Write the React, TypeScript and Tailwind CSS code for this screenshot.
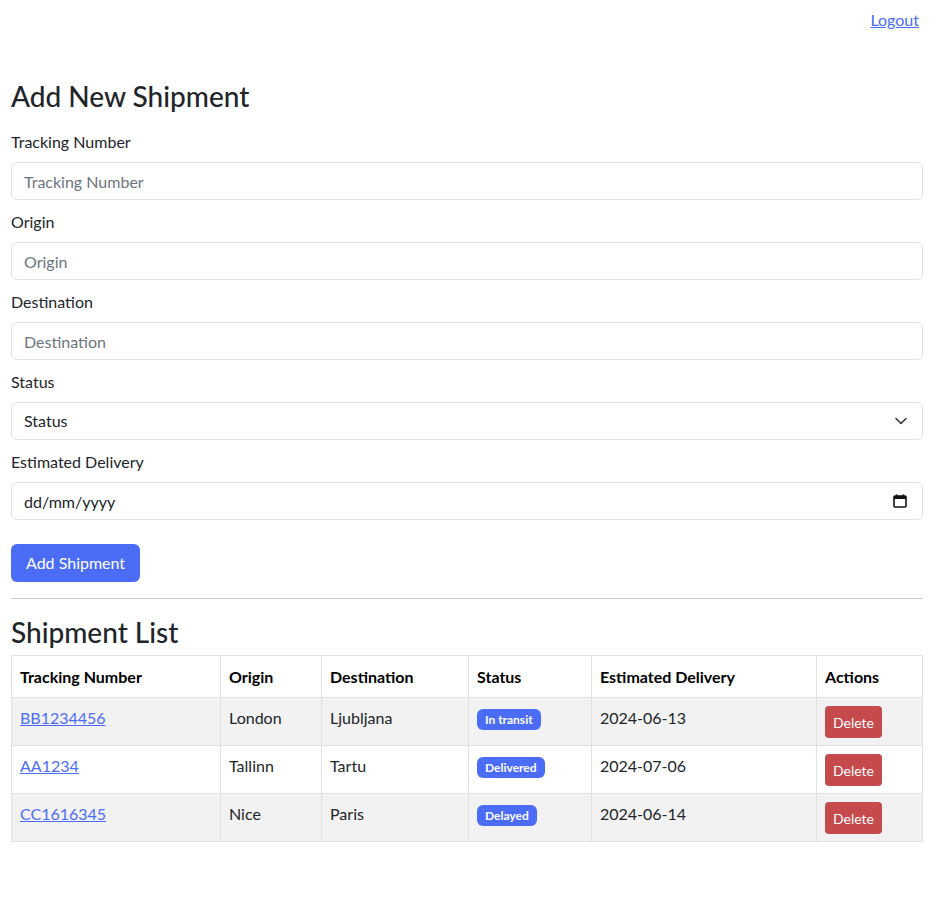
import React from 'react';

const font = { fontFamily: '"Segoe UI", Lato, "Noto Sans", sans-serif' };

const shipments = [
  { id: 'BB1234456', origin: 'London', destination: 'Ljubljana', status: 'In transit', eta: '2024-06-13' },
  { id: 'AA1234', origin: 'Tallinn', destination: 'Tartu', status: 'Delivered', eta: '2024-07-06' },
  { id: 'CC1616345', origin: 'Nice', destination: 'Paris', status: 'Delayed', eta: '2024-06-14' },
];

const Field: React.FC<{ label: string; children: React.ReactNode }> = ({ label, children }) => (
  <div className="mb-[10px]">
    <label className="block h-6 leading-6 mb-2 text-[16px] text-[#212529]">{label}</label>
    {children}
  </div>
);

const inputCls =
  'block w-full h-[38px] px-3 rounded-[6px] border border-[#dee2e6] bg-white text-[16px] text-[#212529] placeholder:text-[#6c757d] outline-none';

export default function App() {
  return (
    <div className="min-h-screen bg-white text-[#212529]" style={font}>
      <div className="h-10 flex items-center justify-end pr-[27px]">
        <a href="#" className="text-[16px] text-[#4a6cf7] underline">Logout</a>
      </div>

      <div className="w-[912px] ml-[11px]">
        <h2 className="mt-[39px] mb-[16px] h-[35px] leading-[35px] text-[28px] font-medium">Add New Shipment</h2>

        <Field label="Tracking Number">
          <input className={inputCls} placeholder="Tracking Number" />
        </Field>
        <Field label="Origin">
          <input className={inputCls} placeholder="Origin" />
        </Field>
        <Field label="Destination">
          <input className={inputCls} placeholder="Destination" />
        </Field>
        <Field label="Status">
          <div className="relative">
            <select className={inputCls + ' appearance-none'} defaultValue="">
              <option value="">Status</option>
              <option>In transit</option>
              <option>Delivered</option>
              <option>Delayed</option>
            </select>
            <svg className="absolute right-[15px] top-[14px]" width="14" height="10" viewBox="0 0 14 10" fill="none">
              <path d="M2 2.5l5 5 5-5" stroke="#343a40" strokeWidth="1.6" strokeLinecap="round" strokeLinejoin="round" />
            </svg>
          </div>
        </Field>
        <Field label="Estimated Delivery">
          <div className="relative">
            <input className={inputCls + ' placeholder:text-[#212529]'} placeholder="dd/mm/yyyy" />
            <svg className="absolute right-[16px] top-[12px]" width="14" height="14" viewBox="0 0 14 14" fill="none">
              <rect x="1" y="2" width="12" height="11" rx="1" stroke="#111" strokeWidth="1.6" />
              <rect x="1" y="2" width="12" height="3" fill="#111" />
              <rect x="3" y="0.5" width="1.6" height="2" fill="#111" />
              <rect x="9.4" y="0.5" width="1.6" height="2" fill="#111" />
            </svg>
          </div>
        </Field>

        <button className="mt-[14px] h-[38px] px-[15px] rounded-[6px] bg-[#4a6cf7] text-white text-[16px]">Add Shipment</button>

        <hr className="mt-4 border-0 border-t border-[#cccccc]" />

        <h2 className="mt-[16px] h-[35px] leading-[35px] text-[28px] font-medium">Shipment List</h2>

        <table className="mt-[5px] w-[911px] table-fixed border-collapse text-[16px]">
          <colgroup>
            <col className="w-[209px]" />
            <col className="w-[101px]" />
            <col className="w-[147px]" />
            <col className="w-[123px]" />
            <col className="w-[225px]" />
            <col className="w-[106px]" />
          </colgroup>
          <thead>
            <tr>
              {['Tracking Number', 'Origin', 'Destination', 'Status', 'Estimated Delivery', 'Actions'].map((h) => (
                <th key={h} className="border border-[#dee2e6] px-2 py-2 h-[42px] text-left font-bold text-black leading-6">
                  {h}
                </th>
              ))}
            </tr>
          </thead>
          <tbody>
            {shipments.map((s, i) => (
              <tr key={s.id} className={i % 2 === 0 ? 'bg-[#f2f2f2]' : 'bg-white'}>
                <td className="border border-[#dee2e6] px-2 pt-2 pb-0 h-[48px] align-top leading-6">
                  <a href="#" className="text-[#4a6cf7] underline">{s.id}</a>
                </td>
                <td className="border border-[#dee2e6] px-2 pt-2 pb-0 align-top leading-6">{s.origin}</td>
                <td className="border border-[#dee2e6] px-2 pt-2 pb-0 align-top leading-6">{s.destination}</td>
                <td className="border border-[#dee2e6] px-2 pt-2 pb-0 align-top leading-6">
                  <span className="inline-block mt-[3px] px-2 h-[21px] leading-[21px] rounded-[6px] bg-[#4a6cf7] text-white text-[12px] font-bold align-top">
                    {s.status}
                  </span>
                </td>
                <td className="border border-[#dee2e6] px-2 pt-2 pb-0 align-top leading-6">{s.eta}</td>
                <td className="border border-[#dee2e6] px-2 pt-2 pb-0 align-top">
                  <button className="h-8 px-2 rounded-[4px] bg-[#c44a4c] text-white text-[14px]">Delete</button>
                </td>
              </tr>
            ))}
          </tbody>
        </table>
      </div>
    </div>
  );
}
